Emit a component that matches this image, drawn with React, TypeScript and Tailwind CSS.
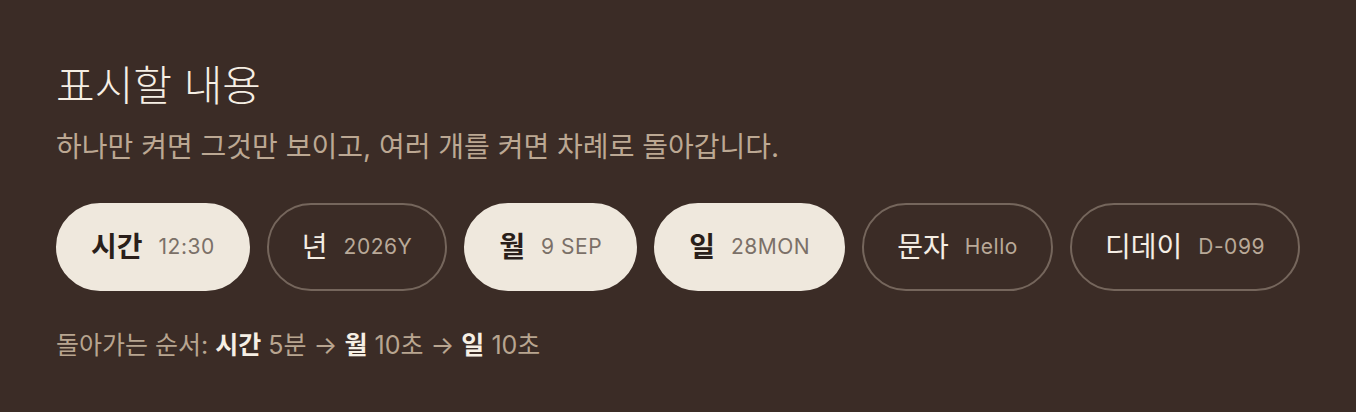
const font = { fontFamily: '"Inter", "Noto Sans CJK KR", sans-serif' };

type Chip = { label: string; value: string; on: boolean };

const chips: Chip[] = [
  { label: "시간", value: "12:30", on: true },
  { label: "년", value: "2026Y", on: false },
  { label: "월", value: "9 SEP", on: true },
  { label: "일", value: "28MON", on: true },
  { label: "문자", value: "Hello", on: false },
  { label: "디데이", value: "D-099", on: false },
];

export default function App() {
  return (
    <div
      className="w-[1356px] h-[412px] bg-[#3b2c26] px-14 pt-[58px]"
      style={font}
    >
      <h1 className="text-[42px] leading-[56px] text-[#f6efe4] font-light">
        표시할 내용
      </h1>
      <p className="mt-[13px] text-[28px] leading-[40px] text-[#bca893]">
        하나만 켜면 그것만 보이고, 여러 개를 켜면 차례로 돌아갑니다.
      </p>
      <div className="mt-[36px] flex gap-[17px]">
        {chips.map((c) => (
          <div
            key={c.label}
            className={
              c.on
                ? "shrink-0 whitespace-nowrap h-[88px] px-[33px] rounded-full flex items-center gap-4 bg-[#efe8dd] border-2 border-[#efe8dd]"
                : "shrink-0 whitespace-nowrap h-[88px] px-[33px] rounded-full flex items-center gap-4 border-2 border-[#75665c]"
            }
          >
            <span
              className={
                c.on
                  ? "text-[28px] font-semibold text-[#2a1f1a]"
                  : "text-[28px] font-normal text-[#f5eee4]"
              }
            >
              {c.label}
            </span>
            <span
              className={
                c.on
                  ? "text-[21px] font-normal tracking-wide text-[#7b7068]"
                  : "text-[21px] font-normal tracking-wide text-[#b9a998]"
              }
            >
              {c.value}
            </span>
          </div>
        ))}
      </div>
      <p className="mt-[36px] text-[25px] leading-[36px] text-[#b8a590]">
        돌아가는 순서: <b className="font-semibold text-[#f6efe4]">시간</b> 5분 →{" "}
        <b className="font-semibold text-[#f6efe4]">월</b> 10초 →{" "}
        <b className="font-semibold text-[#f6efe4]">일</b> 10초
      </p>
    </div>
  );
}
